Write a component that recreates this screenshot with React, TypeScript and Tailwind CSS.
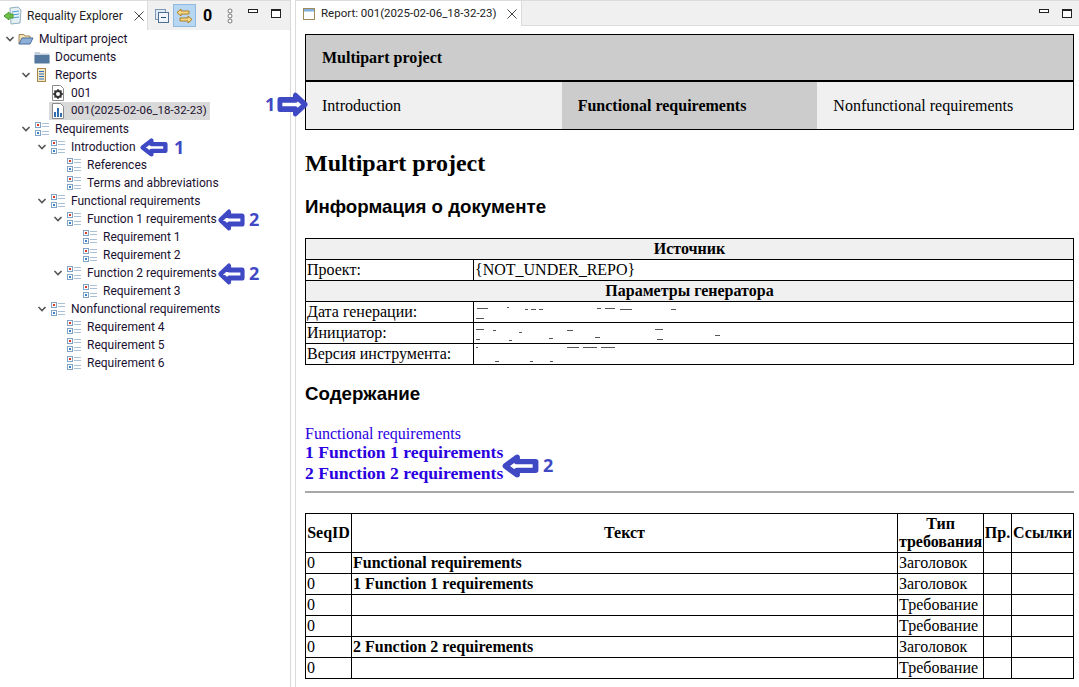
const tree: [number, boolean, string, string][] = [
  [0, true, "folderOpen", "Multipart project"],
  [1, false, "folder", "Documents"],
  [1, true, "reports", "Reports"],
  [2, false, "gear", "001"],
  [2, false, "chart", "001(2025-02-06_18-32-23)"],
  [1, true, "req", "Requirements"],
  [2, true, "req", "Introduction"],
  [3, false, "req", "References"],
  [3, false, "req", "Terms and abbreviations"],
  [2, true, "req", "Functional requirements"],
  [3, true, "req", "Function 1 requirements"],
  [4, false, "req", "Requirement 1"],
  [4, false, "req", "Requirement 2"],
  [3, true, "req", "Function 2 requirements"],
  [4, false, "req", "Requirement 3"],
  [2, true, "req", "Nonfunctional requirements"],
  [3, false, "req", "Requirement 4"],
  [3, false, "req", "Requirement 5"],
  [3, false, "req", "Requirement 6"],
];

const rows: [string, string, boolean][] = [
  ["0", "Functional requirements", true],
  ["0", "1 Function 1 requirements", true],
  ["0", "", false],
  ["0", "", false],
  ["0", "2 Function 2 requirements", true],
  ["0", "", false],
];

const TreeIcon = ({ kind }: { kind: string }) => {
  if (kind === "folderOpen")
    return (
      <svg width="16" height="16" viewBox="0 0 16 16">
        <path d="M1 13V3.5h5l1 1.5h5v2" fill="#f6e3b4" stroke="#a08a5c" />
        <path d="M1 13l3-6h11l-3 6z" fill="#8fb0d8" stroke="#4a6c9c" />
      </svg>
    );
  if (kind === "folder")
    return (
      <svg width="16" height="16" viewBox="0 0 16 16">
        <path d="M0.5 3h5l1 1.5h9V14h-15z" fill="#c5cdd8" />
        <rect x="0.5" y="6" width="15" height="8.5" fill="#55789f" />
      </svg>
    );
  if (kind === "reports")
    return (
      <svg width="16" height="16" viewBox="0 0 16 16">
        <rect x="3.5" y="1.5" width="8" height="13" fill="#f3e6c4" stroke="#a8864a" />
        <path d="M5 4.5h5M5 7h5M5 9.5h5M5 12h5" stroke="#2f6fc0" strokeWidth="1.2" />
      </svg>
    );
  if (kind === "gear")
    return (
      <svg width="16" height="16" viewBox="0 0 16 16">
        <path d="M2.5 0.5h8l3 3v12h-11z" fill="#fff" stroke="#8a8a8a" />
        <circle cx="8" cy="9" r="3" fill="none" stroke="#333" strokeWidth="2" />
        <path d="M8 4v2M8 12v2M3 9h2M11 9h2M4.5 5.5l1.4 1.4M10 11l1.4 1.4M11.5 5.5L10 7M6 11l-1.5 1.5" stroke="#333" strokeWidth="1.4" />
      </svg>
    );
  if (kind === "chart")
    return (
      <svg width="16" height="16" viewBox="0 0 16 16">
        <path d="M2.5 0.5h8l3 3v12h-11z" fill="#fff" stroke="#8a8a8a" />
        <rect x="4" y="9" width="2" height="5" fill="#2f6fb0" />
        <rect x="7" y="5" width="2" height="9" fill="#2f6fb0" />
        <rect x="10" y="10" width="2" height="4" fill="#2f6fb0" />
      </svg>
    );
  return (
    <svg width="16" height="16" viewBox="0 0 16 16">
      <rect x="1.5" y="1.5" width="5" height="5" fill="#fff" stroke="#7fa3c7" />
      <rect x="3" y="3" width="2" height="2" fill="#d8392b" />
      <rect x="1.5" y="9.5" width="5" height="5" fill="#fff" stroke="#7fa3c7" />
      <rect x="3" y="11" width="2" height="2" fill="#3b7fc4" />
      <path d="M8 2.5h7M8 5.5h7M8 10.5h7M8 13.5h7" stroke="#a9bfd6" />
    </svg>
  );
};

const Chevron = () => (
  <svg width="10" height="10" viewBox="0 0 10 10">
    <path d="M1.5 3l3.5 3.5L8.5 3" fill="none" stroke="#555" strokeWidth="1.6" />
  </svg>
);

const CloseX = () => (
  <svg width="10" height="10" viewBox="0 0 10 10">
    <path d="M0.5 0.5l9 9M9.5 0.5l-9 9" stroke="#444" />
  </svg>
);

const MinMax = () => (
  <div className="flex items-start gap-[13px]">
    <div className="w-[10px] h-[4px] border border-[#222] bg-white" />
    <div className="w-[10px] h-[9px] border border-[#222] border-t-2 bg-white" />
  </div>
);

// blue annotation arrow, points left or right
const Arrow = ({ flip, w, h }: { flip?: boolean; w: number; h: number }) => (
  <svg width={w} height={h} viewBox="0 0 32 22" preserveAspectRatio="none" className={flip ? "-scale-x-100" : ""}>
    <path d="M3 11L13 3v4h16v8H13v4z" fill="#fff" stroke="#3f49c4" strokeWidth="5" strokeLinejoin="round" />
  </svg>
);

type NoteProps = { n: string; className: string; flip?: boolean; w: number; h: number };

const Note = ({ n, className, flip, w, h }: NoteProps) => (
  <div className={`absolute flex items-center text-[#3f49c4] text-[18px] font-bold font-['Open_Sans',sans-serif] ${className}`}>
    {flip ? <span>{n}</span> : null}
    <Arrow flip={flip} w={w} h={h} />
    {flip ? null : <span>{n}</span>}
  </div>
);

// the scrubbed out values in the info table
const Scrubbed = ({ marks }: { marks: number[][] }) => (
  <svg width="300" height="18" viewBox="0 0 300 18" className="block">
    {marks.map((m, i) => (
      <rect key={i} x={m[0]} y={m[1]} width={m[2]} height={1} fill="#555" />
    ))}
  </svg>
);

const cell = "border border-black px-px py-0 h-[21px] leading-[18px]";

const App = () => {
  return (
    <div className="relative w-[1079px] h-[687px] flex bg-white overflow-hidden text-black font-['Liberation_Serif',serif]">
      {/* explorer */}
      <div className="w-[291px] border-r border-[#d9d9d9] shrink-0 font-['Roboto',sans-serif] text-[12px] text-[#1a1030]">
        <div className="h-[30px] flex border-t border-[#dcdcdc] bg-[#f0f0f0]">
          <div className="w-[148px] flex items-center bg-white pl-[3px] gap-[5px] border-r border-[#dcdcdc]">
            <svg width="19" height="20" viewBox="0 0 19 20" className="shrink-0">
              <path d="M7 2l8-1 3 3 -1 13-9 1z" fill="#e4f0f6" stroke="#8fb0bc" />
              <path d="M9 6l7-1M9 9l7-1M9 12l7-1" stroke="#4fa0d8" />
              <path d="M1 10l5-4v2h4v4H6v2z" fill="#6cc04a" stroke="#4d9a2f" />
            </svg>
            <span className="text-[#222] whitespace-nowrap">Requality Explorer</span>
            <span className="ml-[6px]"><CloseX /></span>
          </div>
          <div className="flex items-center pl-[6px] h-full">
            <svg width="16" height="16" viewBox="0 0 16 16" className="mr-[3px]">
              <rect x="1.5" y="1.5" width="10" height="10" fill="#dfeaf4" stroke="#7d98b3" />
              <rect x="4.5" y="4.5" width="10" height="10" fill="#eef4fa" stroke="#4f6f90" />
              <path d="M7 9.5h5" stroke="#2b4c70" />
            </svg>
            <div className="w-[23px] h-[23px] flex items-center justify-center bg-[#b6d6f2] border border-[#8fb9dd]">
              <svg width="17" height="16" viewBox="0 0 17 16">
                <path d="M1 4.5L5 1v2h8v3H5v2z" fill="#f7d98c" stroke="#b07f1c" />
                <path d="M16 11.5L12 8v2H4v3h8v2z" fill="#f7d98c" stroke="#b07f1c" />
              </svg>
            </div>
            <span className="w-[23px] text-center text-[16px] font-bold text-black leading-none">0</span>
            <svg width="8" height="16" viewBox="0 0 8 16" className="ml-[7px]">
              <circle cx="4" cy="3" r="2" fill="#fff" stroke="#777" />
              <circle cx="4" cy="8" r="2" fill="#fff" stroke="#777" />
              <circle cx="4" cy="13" r="2" fill="#fff" stroke="#777" />
            </svg>
            <div className="ml-[14px] -mt-[5px]"><MinMax /></div>
          </div>
        </div>
        <div>
          {tree.map(([level, open, icon, label], i) => (
            <div key={i} className="h-[18px] flex items-center" style={{ paddingLeft: level * 16 + 5 }}>
              <span className="w-[10px] flex justify-center shrink-0">{open ? <Chevron /> : null}</span>
              <div className={`flex items-center h-[18px] ml-[2px] pl-[1px] pr-[3px] gap-[5px] ${label.startsWith("001(") ? "bg-[#d9d9d9] text-[11.5px]" : ""}`}>
                <TreeIcon kind={icon} />
                <span className="whitespace-nowrap">{label}</span>
              </div>
            </div>
          ))}
        </div>
      </div>

      {/* report */}
      <div className="ml-[4px] flex-1 min-w-0 border-l border-[#dcdcdc]">
        <div className="h-[26px] flex bg-[#f0f0f0] border-t border-b border-[#dcdcdc] font-['Roboto',sans-serif] text-[11.5px] text-[#222]">
          <div className="w-[226px] h-[25px] flex items-center bg-white border-r border-[#dcdcdc] pl-[7px] gap-[6px]">
            <svg width="12" height="12" viewBox="0 0 12 12" className="shrink-0">
              <rect x="0.5" y="0.5" width="11" height="11" fill="#fff" stroke="#a08a5c" />
              <rect x="1" y="1" width="10" height="2.5" fill="#7fb0dc" />
            </svg>
            <span className="whitespace-nowrap">Report: 001(2025-02-06_18-32-23)</span>
            <span className="ml-[4px]"><CloseX /></span>
          </div>
          <div className="ml-auto mr-[7px] flex items-center"><MinMax /></div>
        </div>

        <div className="pl-[9px] pr-[5px] pt-[8px]">
          <div className="border border-black">
            <div className="h-[47px] bg-[#cccccc] border-b-2 border-black flex items-center pl-[16px] text-[16px] font-bold">
              Multipart project
            </div>
            <div className="grid grid-cols-3 h-[47px] text-[16px] bg-[#f0f0f0]">
              <div className="flex items-center pl-[16px]">Introduction</div>
              <div className="flex items-center pl-[16px] bg-[#cccccc] font-bold">Functional requirements</div>
              <div className="flex items-center pl-[16px]">Nonfunctional requirements</div>
            </div>
          </div>

          <h1 className="text-[24px] font-bold leading-[28px] mt-[19px]">Multipart project</h1>
          <h2 className="text-[18.72px] font-bold leading-[22px] mt-[19px] font-['Liberation_Sans',sans-serif]">Информация о документе</h2>

          <table className="w-full border-collapse text-[16px] mt-[20px] table-fixed">
            <colgroup>
              <col className="w-[168px]" />
              <col />
            </colgroup>
            <tbody>
              <tr className="bg-[#f0f0f0]">
                <th colSpan={2} className="border border-black h-[21px] leading-[18px] p-0 font-bold">Источник</th>
              </tr>
              <tr>
                <td className="border border-black h-[21px] leading-[16px] p-0 px-px">Проект:</td>
                <td className="border border-black leading-[16px] p-0 px-px">{"{NOT_UNDER_REPO}"}</td>
              </tr>
              <tr className="bg-[#f0f0f0]">
                <th colSpan={2} className="border border-black h-[21px] leading-[18px] p-0 font-bold">Параметры генератора</th>
              </tr>
              <tr>
                <td className="border border-black h-[21px] leading-[18px] p-0 px-px">Дата генерации:</td>
                <td className="border border-black p-0 px-px">
                  <Scrubbed marks={[[2, 5, 11], [32, 4, 2], [50, 6, 3], [56, 6, 5], [64, 6, 4], [122, 5, 4], [130, 5, 10], [145, 6, 12], [196, 6, 5], [1, 15, 8]]} />
                </td>
              </tr>
              <tr>
                <td className="border border-black h-[21px] leading-[18px] p-0 px-px">Инициатор:</td>
                <td className="border border-black p-0 px-px">
                  <Scrubbed marks={[[1, 5, 8], [1, 15, 4], [18, 6, 3], [34, 16, 3], [44, 8, 3], [74, 14, 4], [92, 6, 6], [120, 13, 5], [180, 5, 8], [182, 15, 6], [240, 11, 5]]} />
                </td>
              </tr>
              <tr>
                <td className="border border-black h-[21px] leading-[18px] p-0 px-px">Версия инструмента:</td>
                <td className="border border-black p-0 px-px">
                  <Scrubbed marks={[[1, 2, 2], [92, 2, 12], [108, 2, 14], [126, 2, 14], [20, 16, 4], [55, 16, 3], [75, 16, 3]]} />
                </td>
              </tr>
            </tbody>
          </table>

          <h2 className="text-[18.72px] font-bold leading-[22px] mt-[18px] font-['Liberation_Sans',sans-serif]">Содержание</h2>

          <div className="mt-[20px] text-[#2a00e0]">
            <div className="text-[16px] leading-[17px]">Functional requirements</div>
            <div className="text-[17.6px] font-bold leading-[21px]">1 Function 1 requirements</div>
            <div className="text-[17.6px] font-bold leading-[21px]">2 Function 2 requirements</div>
          </div>
          <hr className="border-0 border-t-2 border-[#a8a8a8] mt-[7px]" />

          <table className="w-full border-collapse text-[16px] mt-[20px] table-fixed">
            <colgroup>
              <col className="w-[46px]" />
              <col />
              <col className="w-[86px]" />
              <col className="w-[28px]" />
              <col className="w-[62px]" />
            </colgroup>
            <thead>
              <tr>
                <th className="border border-black h-[39px] p-0 font-bold">SeqID</th>
                <th className="border border-black p-0 font-bold">Текст</th>
                <th className="border border-black p-0 font-bold leading-[18px]">Тип требования</th>
                <th className="border border-black p-0 font-bold">Пр.</th>
                <th className="border border-black p-0 font-bold whitespace-nowrap">Ссылки</th>
              </tr>
            </thead>
            <tbody>
              {rows.map(([seq, text, bold], i) => (
                <tr key={i}>
                  <td className={cell}>{seq}</td>
                  <td className={`${cell} ${bold ? "font-bold" : ""}`}>{text}</td>
                  <td className={cell}>{i === 0 || i === 1 || i === 4 ? "Заголовок" : "Требование"}</td>
                  <td className={cell}></td>
                  <td className={cell}></td>
                </tr>
              ))}
            </tbody>
          </table>
        </div>
      </div>

      {/* annotations drawn over the shot */}
      <Note n="1" flip w={31} h={25} className="left-[265px] top-[91px] gap-[2px]" />
      <Note n="1" w={28} h={19} className="left-[140px] top-[134px] gap-[6px]" />
      <Note n="2" w={27} h={22} className="left-[218px] top-[206px] gap-[4px]" />
      <Note n="2" w={27} h={22} className="left-[218px] top-[260px] gap-[4px]" />
      <Note n="2" w={37} h={24} className="left-[502px] top-[452px] gap-[4px]" />
    </div>
  );
};

export default App;
